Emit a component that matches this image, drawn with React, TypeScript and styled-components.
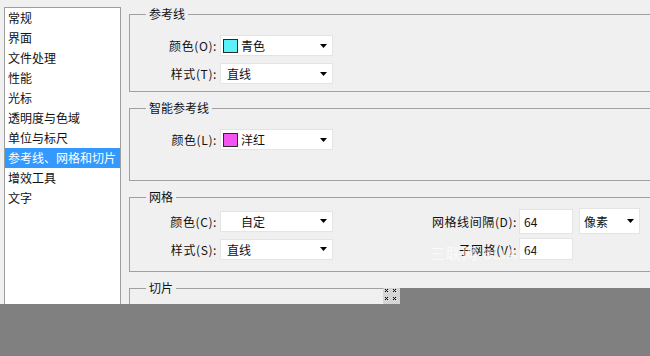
import React from "react";
import styled, { createGlobalStyle } from "styled-components";

const Global = createGlobalStyle`
  html, body { margin: 0; padding: 0; }
  body {
    font-family: "Noto Sans CJK SC", "Microsoft YaHei", sans-serif;
    font-size: 12px;
    color: #111;
    background: #808080;
  }
`;

const Screen = styled.div`
  position: relative;
  width: 650px;
  height: 356px;
  overflow: hidden;
  background: #f0f0f0;
  display: flex;
  align-items: flex-start;
`;

const NavList = styled.ul`
  list-style: none;
  margin: 7px 0 0 4px;
  padding: 0;
  box-sizing: border-box;
  width: 117px;
  height: 340px;
  flex: none;
  background: #fff;
  border: 1px solid #9e9e9e;
`;

const NavItem = styled.li<{ $active?: boolean }>`
  height: 20px;
  line-height: 20px;
  padding-left: 3px;
  white-space: nowrap;
  color: ${(p) => (p.$active ? "#fff" : "#111")};
  background: ${(p) => (p.$active ? "#3399ff" : "transparent")};
`;

const Main = styled.div`
  flex: none;
  width: 540px;
  margin: 6px 0 0 8px;
  display: flex;
  flex-direction: column;
  gap: 8px;
`;

const Group = styled.fieldset<{ $pt: number; $pb: number }>`
  margin: 0;
  min-width: 0;
  padding: ${(p) => p.$pt}px 0 ${(p) => p.$pb}px 0;
  border: 1px solid #a0a0a0;
`;

const Legend = styled.legend`
  margin-left: 16px;
  padding: 0 3px;
  line-height: 16px;
  font-size: 12px;
`;

const Rows = styled.div<{ $gap: number }>`
  display: flex;
  flex-direction: column;
  gap: ${(p) => p.$gap}px;
`;

const Row = styled.div<{ $h: number }>`
  display: flex;
  align-items: center;
  height: ${(p) => p.$h}px;
`;

const Label = styled.span<{ $w: number; $gap: number }>`
  width: ${(p) => p.$w}px;
  margin-right: ${(p) => p.$gap}px;
  text-align: right;
  white-space: nowrap;
  letter-spacing: 0.6px;
`;

const SelectBox = styled.div<{ $w: number; $h: number; $pad: number }>`
  display: flex;
  align-items: center;
  box-sizing: border-box;
  width: ${(p) => p.$w}px;
  height: ${(p) => p.$h}px;
  padding-left: ${(p) => p.$pad}px;
  background: #fff;
  border: 1px solid #e4e4e4;
  white-space: nowrap;
`;

const Swatch = styled.span<{ $color?: string }>`
  box-sizing: border-box;
  width: 15px;
  height: 14px;
  margin-right: 3px;
  flex: none;
  background: ${(p) => p.$color ?? "transparent"};
  border: 1px solid ${(p) => (p.$color ? "#2a2a2a" : "transparent")};
`;

const Arrow = styled.svg`
  margin-left: auto;
  margin-right: 5px;
  flex: none;
`;

const TextBox = styled.div<{ $w: number; $h: number }>`
  display: flex;
  align-items: center;
  box-sizing: border-box;
  width: ${(p) => p.$w}px;
  height: ${(p) => p.$h}px;
  padding-left: 4px;
  margin-right: 6px;
  background: #fff;
  border: 1px solid #e4e4e4;
`;

const GridBody = styled.div`
  display: flex;
  align-items: flex-start;
`;

const RightCol = styled.div`
  margin-left: 84px;
`;

const Watermark = styled.span`
  position: absolute;
  left: 430px;
  top: 242px;
  font-family: "Liberation Sans", "Noto Sans CJK SC", sans-serif;
  font-size: 15px;
  letter-spacing: 1px;
  color: rgba(255, 255, 255, 0.7);
  white-space: nowrap;
  pointer-events: none;
`;

const BottomMask = styled.div`
  position: absolute;
  left: 0;
  top: 304px;
  width: 650px;
  height: 52px;
  background: #808080;
`;

const CornerMask = styled.div`
  position: absolute;
  left: 400px;
  top: 288px;
  width: 250px;
  height: 16px;
  background: #808080;
`;

const Grip = styled.svg`
  position: absolute;
  left: 383px;
  top: 288px;
`;

function DropArrow() {
  return (
    <Arrow width="7" height="4" viewBox="0 0 7 4">
      <path d="M0 0H7L3.5 4Z" fill="#000" />
    </Arrow>
  );
}

type SelectProps = {
  w: number;
  h?: number;
  pad?: number;
  text: string;
  swatch?: string | null;
};

function Select({ w, h = 21, pad = 6, text, swatch }: SelectProps) {
  return (
    <SelectBox $w={w} $h={h} $pad={swatch !== undefined ? 2 : pad}>
      {swatch !== undefined && <Swatch $color={swatch ?? undefined} />}
      <span>{text}</span>
      <DropArrow />
    </SelectBox>
  );
}

const navItems = [
  "常规",
  "界面",
  "文件处理",
  "性能",
  "光标",
  "透明度与色域",
  "单位与标尺",
  "参考线、网格和切片",
  "增效工具",
  "文字",
];

export default function App() {
  return (
    <>
      <Global />
      <Screen>
        <NavList>
          {navItems.map((t, i) => (
            <NavItem key={t} $active={i === 7}>
              {t}
            </NavItem>
          ))}
        </NavList>
        <Main>
          <Group $pt={13} $pb={7}>
            <Legend>参考线</Legend>
            <Rows $gap={7}>
              <Row $h={21}>
                <Label $w={87} $gap={3}>颜色(O):</Label>
                <Select w={113} text="青色" swatch="#5cf0f8" />
              </Row>
              <Row $h={21}>
                <Label $w={87} $gap={3}>样式(T):</Label>
                <Select w={113} text="直线" />
              </Row>
            </Rows>
          </Group>
          <Group $pt={13} $pb={30}>
            <Legend>智能参考线</Legend>
            <Rows $gap={7}>
              <Row $h={21}>
                <Label $w={87} $gap={3}>颜色(L):</Label>
                <Select w={113} text="洋红" swatch="#f455f0" />
              </Row>
            </Rows>
          </Group>
          <Group $pt={4} $pb={10}>
            <Legend>网格</Legend>
            <GridBody>
              <Rows $gap={4}>
                <Row $h={24}>
                  <Label $w={87} $gap={3}>颜色(C):</Label>
                  <Select w={113} text="自定" swatch={null} />
                </Row>
                <Row $h={24}>
                  <Label $w={87} $gap={3}>样式(S):</Label>
                  <Select w={113} text="直线" />
                </Row>
              </Rows>
              <RightCol>
                <Rows $gap={4}>
                  <Row $h={24}>
                    <Label $w={100} $gap={2}>网格线间隔(D):</Label>
                    <TextBox $w={54} $h={25}>64</TextBox>
                    <Select w={61} h={26} pad={4} text="像素" />
                  </Row>
                  <Row $h={24}>
                    <Label $w={100} $gap={2}>子网格(V):</Label>
                    <TextBox $w={54} $h={22}>64</TextBox>
                  </Row>
                </Rows>
              </RightCol>
            </GridBody>
          </Group>
          <Group $pt={40} $pb={10}>
            <Legend>切片</Legend>
          </Group>
        </Main>
        <Watermark>三联网 3LIAN.COM</Watermark>
        <BottomMask />
        <CornerMask />
        <Grip width="17" height="16" viewBox="0 0 17 16">
          <defs>
            <pattern id="chk" width="2" height="2" patternUnits="userSpaceOnUse">
              <rect width="2" height="2" fill="#e6e6e6" />
              <rect width="1" height="1" fill="#c4c4c4" />
              <rect x="1" y="1" width="1" height="1" fill="#c4c4c4" />
            </pattern>
          </defs>
          <rect width="17" height="16" fill="url(#chk)" />
          {[
            [2, 1],
            [10, 1],
            [2, 9],
            [10, 9],
          ].map(([x, y]) => (
            <g key={`${x}-${y}`} fill="#111">
              <rect x={x} y={y} width="1" height="1" />
              <rect x={x + 2} y={y} width="1" height="1" />
              <rect x={x + 1} y={y + 1} width="1" height="1" />
              <rect x={x} y={y + 2} width="1" height="1" />
              <rect x={x + 2} y={y + 2} width="1" height="1" />
            </g>
          ))}
        </Grip>
      </Screen>
    </>
  );
}
